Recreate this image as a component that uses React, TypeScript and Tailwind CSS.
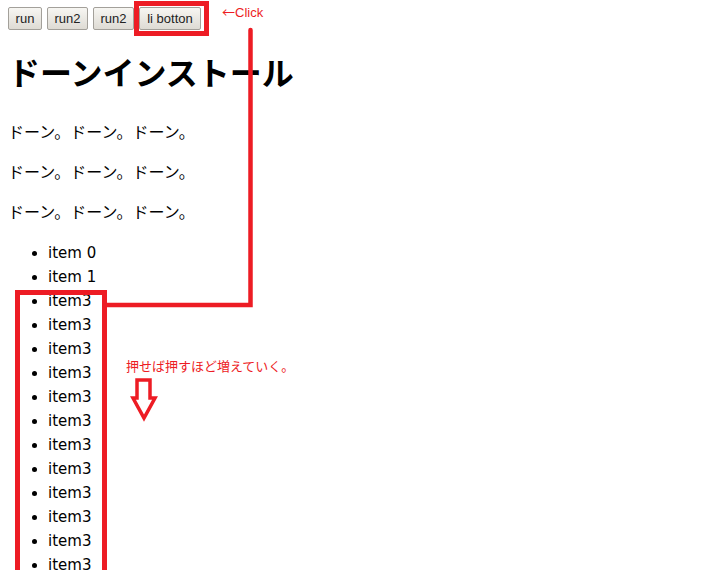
import React, { useState } from "react";

const RED = "#ed1c24";

const buttons = [
  { label: "run", w: "w-[34px]" },
  { label: "run2", w: "w-[41px]" },
  { label: "run2", w: "w-[41px]" },
  { label: "li botton", w: "w-[62px]" },
];

const App: React.FC = () => {
  const [count] = useState(12);
  const items = Array.from({ length: count }, () => "item3");

  return (
    <div className="relative h-[570px] w-[702px] overflow-hidden bg-white text-black [font-family:'DejaVu_Sans','Noto_Sans_CJK_JP',sans-serif]">
      <div className="px-[8px] pt-[7px]">
        {/* Buttons */}
        <div className="flex gap-[5px]">
          {buttons.map((b, i) => (
            <button
              key={i}
              type="button"
              className={`${b.w} h-[23px] rounded-[2px] border border-[#a3a09a] bg-gradient-to-b from-[#f7f6f2] to-[#dedbd4] text-[13px] leading-none text-[#222] [font-family:'Liberation_Sans',sans-serif]`}
            >
              {b.label}
            </button>
          ))}
        </div>

        <h1 className="mt-[21px] text-[32px] font-bold leading-[40px] [font-family:'Noto_Sans_CJK_JP',sans-serif]">
          ドーンインストール
        </h1>

        {/* Paragraphs */}
        <div className="mt-[28px] flex flex-col gap-[16px] text-[16px] leading-[24px] [font-family:'Noto_Sans_CJK_JP',sans-serif]">
          <p>ドーン。ドーン。ドーン。</p>
          <p>ドーン。ドーン。ドーン。</p>
          <p>ドーン。ドーン。ドーン。</p>
        </div>

        {/* List */}
        <ul className="mt-[18px] list-disc pl-[40px] text-[15px] leading-[24px]">
          <li>item 0</li>
          <li>item 1</li>
          {items.map((t, i) => (
            <li key={i}>{t}</li>
          ))}
        </ul>
      </div>

      {/* Annotations */}
      <svg
        className="pointer-events-none absolute left-0 top-0"
        width="702"
        height="570"
        viewBox="0 0 702 570"
      >
        <rect x="136.5" y="3.5" width="70" height="30" fill="none" stroke={RED} strokeWidth="5" />
        <path d="M250.5 30 V305 H105" fill="none" stroke={RED} strokeWidth="4.5" strokeLinecap="round" />
        <rect x="17.5" y="292.5" width="87" height="300" fill="none" stroke={RED} strokeWidth="5" />
        <path
          d="M137 380 H150 V398 H155 L144 418 L133 398 H137 Z"
          fill="none"
          stroke={RED}
          strokeWidth="3.5"
          strokeLinejoin="miter"
        />
      </svg>
      <span className="absolute left-[222px] top-[4px] text-[13px] leading-[16px] text-[#ed1c24] [font-family:'Liberation_Sans',sans-serif]">
        <span className="[font-family:'Noto_Sans_CJK_JP',sans-serif]">←</span>Click
      </span>
      <span className="absolute left-[126px] top-[358px] text-[13px] leading-[16px] text-[#ed1c24] [font-family:'Noto_Sans_CJK_JP',sans-serif]">
        押せば押すほど増えていく。
      </span>
    </div>
  );
};

export default App;
